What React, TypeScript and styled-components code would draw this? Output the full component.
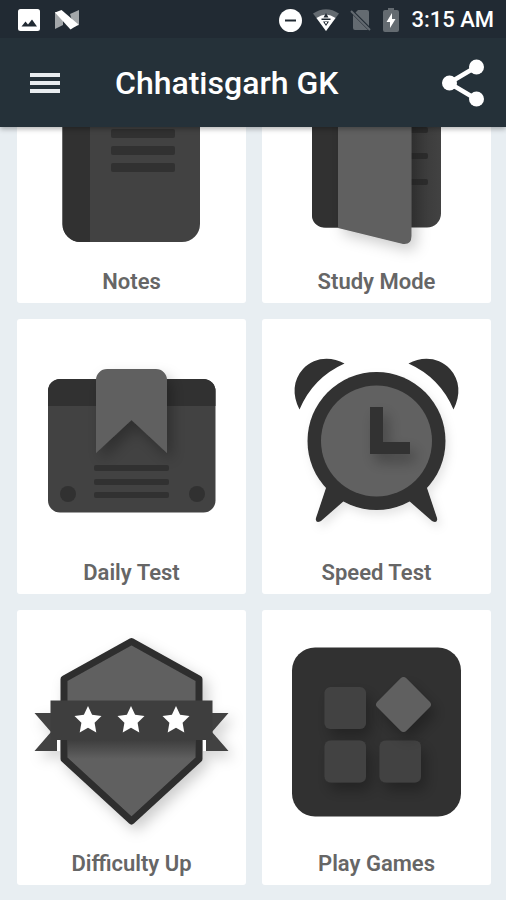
import React from "react";
import styled, { createGlobalStyle } from "styled-components";

const GlobalStyle = createGlobalStyle`
  * { box-sizing: border-box; }
  body { margin: 0; background: #e8eef2; }
  button { font: inherit; border: 0; padding: 0; background: none; cursor: pointer; }
`;

const dark = "#313131";
const mid = "#424242";
const light = "#616161";

const Screen = styled.div`
  height: 100vh;
  display: flex;
  flex-direction: column;
  font-family: Roboto, "Liberation Sans", sans-serif;
`;

const StatusBar = styled.div`
  flex: none;
  height: 38px;
  display: flex;
  align-items: center;
  justify-content: space-between;
  padding: 2px 12px 0 18px;
  background: #212a33;
  color: #fff;
  z-index: 2;
`;

const StatusGroup = styled.div<{ $gap: number }>`
  display: flex;
  align-items: center;
  gap: ${(p) => p.$gap}px;
`;

const Clock = styled.time`
  font-size: 22px;
  line-height: 28px;
  font-weight: 500;
`;

const AppBar = styled.header`
  flex: none;
  height: 89px;
  display: flex;
  align-items: center;
  padding: 0 20px 0 28px;
  background: #253139;
  color: #fff;
  box-shadow: 0 2px 5px rgba(0, 0, 0, 0.3);
  z-index: 1;
`;

const IconButton = styled.button`
  flex: none;
  display: flex;
  color: inherit;
`;

const Title = styled.h1`
  flex: 1;
  margin: 0 0 0 53px;
  font-size: 32px;
  line-height: 40px;
  font-weight: 500;
  white-space: nowrap;
`;

/* Reversed column: the list opens at its last row and scrolls up from there. */
const Scroller = styled.main`
  flex: 1;
  min-height: 0;
  display: flex;
  flex-direction: column-reverse;
  overflow-y: auto;
  scrollbar-width: none;
`;

const Grid = styled.div`
  display: grid;
  grid-template-columns: 1fr 1fr;
  gap: 16px;
  padding: 16px 15px 15px 17px;
`;

const Card = styled.button`
  display: flex;
  flex-direction: column;
  padding: 0 0 9px;
  border-radius: 3px;
  background: #fff;
`;

const Art = styled.svg`
  display: block;
  width: 100%;
`;

const Label = styled.span`
  align-self: center;
  color: #666;
  font-size: 22px;
  line-height: 24px;
  font-weight: 600;
`;

const Notes = () => (
  <>
    <rect x="45.5" y="30" width="137.5" height="184" rx="18" fill={mid} />
    <path d="M63.5 30H73V214H63.5A18 18 0 0 1 45.5 196V48A18 18 0 0 1 63.5 30Z" fill={dark} />
    {[101, 118, 135].map((y) => (
      <rect key={y} x="94" y={y} width="64" height="9" rx="2" fill={dark} />
    ))}
  </>
);

const Study = () => (
  <>
    <defs>
      <linearGradient id="page" x1="0" x2="1">
        <stop offset="0.75" stopColor="#363636" />
        <stop offset="1" stopColor={mid} />
      </linearGradient>
    </defs>
    <rect x="50" y="44" width="129" height="155.5" rx="14" fill="url(#page)" />
    <path d="M64 44H76V199.5H62A12 12 0 0 1 50 187V56A12 12 0 0 1 64 44Z" fill={dark} />
    {[99, 125, 151].map((y) => (
      <rect key={y} x="140" y={y} width="26" height="6" rx="2" fill="#2c2c2c" />
    ))}
    <path d="M76 50L142 34Q149.5 33 149.5 41V208Q149.5 217 141 216L76 200Z" fill={light} filter="url(#lift)" />
  </>
);

const Daily = () => (
  <>
    <rect x="31" y="60" width="167.5" height="133.5" rx="12" fill={mid} />
    <path d="M31 87V72A12 12 0 0 1 43 60H186.5A12 12 0 0 1 198.5 72V87Z" fill={dark} />
    <path d="M90 50H139A11 11 0 0 1 150 61V134L114.5 101L79 134V61A11 11 0 0 1 90 50Z" fill={light} filter="url(#soft)" />
    {[146, 160, 173].map((y) => (
      <rect key={y} x="77" y={y} width="75" height="6" rx="2" fill={dark} />
    ))}
    <circle cx="51" cy="175" r="8" fill={dark} />
    <circle cx="180" cy="175" r="8" fill={dark} />
  </>
);

const bell = "M37.5 90.5C30 76 31 61 41 50C52 38 69 37 82.5 44.5A88 88 0 0 0 37.5 90.5Z";
const leg = "M65 166L54 199Q53 205 59 202L83 181Z";

const Speed = () => (
  <>
    <path d={bell} fill={dark} />
    <path d={bell} fill={dark} transform="matrix(-1 0 0 1 229 0)" />
    <g fill={dark} filter="url(#faint)">
      <path d={leg} />
      <path d={leg} transform="matrix(-1 0 0 1 229 0)" />
      <circle cx="114.5" cy="122" r="69" />
    </g>
    <circle cx="114.5" cy="122" r="55.5" fill={light} />
    <path d="M108 88H121V123H148V135H108Z" fill={dark} filter="url(#soft)" />
  </>
);

const star = "M0-14L4.1-5.2L13.5-4L6.6 2.7L8.3 12.5L0 7.8L-8.3 12.5L-6.6 2.7L-13.5-4L-4.1-5.2Z";

const Difficulty = () => (
  <>
    <defs>
      <linearGradient id="below" x1="0" y1="0" x2="0" y2="1">
        <stop offset="0" stopColor="#222" stopOpacity="0.55" />
        <stop offset="1" stopColor="#222" stopOpacity="0" />
      </linearGradient>
    </defs>
    <g filter="url(#lift)">
      <path d="M114.5 31.5L182 69V149L114.5 211L47 149V69Z" fill={light} stroke="#2e2e2e" strokeWidth="7" strokeLinejoin="round" />
      <path d="M17.5 103H40V141H17.5L34 122ZM211.5 103H189V141H211.5L195 122Z" fill={mid} />
    </g>
    <path d="M50.5 130H178.5V149H50.5Z" fill="url(#below)" />
    <path d="M40 130H43V141H40ZM186 130H189V141H186Z" fill="#fff" />
    <rect x="33.5" y="90.5" width="162" height="39.5" fill="#3e3e3e" />
    {[71, 114, 159].map((x) => (
      <path key={x} d={star} fill="#fff" transform={`translate(${x} 110)`} />
    ))}
  </>
);

const Games = () => (
  <>
    <rect x="30" y="37.5" width="169" height="169" rx="23" fill={dark} />
    <g fill={mid} filter="url(#soft)">
      <rect x="62.5" y="77" width="41.5" height="42" rx="6" />
      <rect x="62.5" y="130.5" width="41.5" height="42" rx="6" />
      <rect x="117.5" y="130.5" width="41.5" height="42" rx="6" />
    </g>
    <g filter="url(#soft)">
      <rect x="121" y="74" width="41" height="41" rx="4" fill={light} transform="rotate(45 141.5 94.5)" />
    </g>
  </>
);

const items = [
  { label: "Notes", Drawing: Notes },
  { label: "Study Mode", Drawing: Study },
  { label: "Daily Test", Drawing: Daily },
  { label: "Speed Test", Drawing: Speed },
  { label: "Difficulty Up", Drawing: Difficulty },
  { label: "Play Games", Drawing: Games },
];

const ShadowFilters = () => (
  <svg width="0" height="0" aria-hidden="true" display="block">
    <defs>
      <filter id="lift" x="-20%" y="-20%" width="150%" height="150%">
        <feDropShadow dx="5" dy="6" stdDeviation="7" floodColor="#000" floodOpacity="0.2" />
      </filter>
      <filter id="faint" x="-20%" y="-20%" width="150%" height="150%">
        <feDropShadow dx="3" dy="5" stdDeviation="5" floodColor="#000" floodOpacity="0.1" />
      </filter>
      <filter id="soft" x="-30%" y="-30%" width="180%" height="180%">
        <feDropShadow dx="5" dy="8" stdDeviation="7" floodColor="#000" floodOpacity="0.28" />
      </filter>
    </defs>
  </svg>
);

export default function App() {
  return (
    <Screen>
      <GlobalStyle />
      <ShadowFilters />
      <StatusBar>
        <StatusGroup $gap={14}>
          <svg width="22" height="22" viewBox="0 0 22 22">
            <rect width="22" height="22" rx="2.5" fill="#fff" />
            <path d="M3.5 17.5L7.5 12.5L10 15.5L14 10.5L19 17.5Z" fill="#212a33" />
          </svg>
          <svg width="26" height="22" viewBox="0 0 26 22">
            <path d="M1 3H9V16L1 20ZM16 5L25 1V16L20 18Z" fill="#a3a7aa" />
            <path d="M1 3.5L7.5 1L24.5 15.5L16.5 20.5Z" fill="#fff" />
          </svg>
        </StatusGroup>
        <StatusGroup $gap={11}>
          <svg width="23" height="23" viewBox="0 0 23 23">
            <circle cx="11.5" cy="11.5" r="11.5" fill="#fff" />
            <path d="M6 10.5H17V12.5H6Z" fill="#212a33" />
          </svg>
          <svg width="26" height="22" viewBox="0 0 26 22">
            <path d="M0 4.5Q13-4 26 4.5L13 22Z" fill="#646b71" />
            <path d="M3.500 9Q13 2 22.500 9L13 22Z" fill="#fff" />
            <path d="M13 4L15.500 8.500H10.500ZM8.500 9.500H17.500V11H8.500ZM10 12.500H16L13 17Z" fill="#212a33" />
            <path d="M12 13H14V14.5H12Z" fill="#fff" />
          </svg>
          <svg width="21" height="22" viewBox="0 0 21 22">
            <path d="M8 1H17Q19 1 19 3V17L5.5 3.5ZM3 6L18 21H5Q3 21 3 19Z" fill="#646b71" />
            <path d="M1 2L20 21" stroke="#646b71" strokeWidth="2" />
          </svg>
          <svg width="18" height="24" viewBox="0 0 18 24">
            <path d="M6 0H12V2H15Q17 2 17 4V22Q17 24 15 24H3Q1 24 1 22V4Q1 2 3 2H6Z" fill="#646b71" />
            <path d="M10 5L4.5 14H8V20L13.5 11H10Z" fill="#fff" />
          </svg>
          <Clock>3:15 AM</Clock>
        </StatusGroup>
      </StatusBar>
      <AppBar>
        <IconButton aria-label="Menu">
          <svg width="34" height="22" viewBox="0 0 34 22">
            <path d="M2 1H32V5H2ZM2 9H32V13H2ZM2 17H32V21H2Z" fill="#e9ecef" />
          </svg>
        </IconButton>
        <Title>Chhatisgarh GK</Title>
        <IconButton aria-label="Share">
          <svg width="44" height="48" viewBox="0 0 44 48">
            <path d="M34 8L7 24L34 40" fill="none" stroke="#fff" strokeWidth="4.5" />
            <g fill="#fff">
              <circle cx="34.5" cy="8" r="7.5" />
              <circle cx="7.5" cy="24" r="7.5" />
              <circle cx="34.5" cy="40" r="7.5" />
            </g>
          </svg>
        </IconButton>
      </AppBar>
      <Scroller>
        <Grid>
          {items.map(({ label, Drawing }) => (
            <Card key={label}>
              <Art viewBox="0 0 229 242" aria-hidden="true">
                <Drawing />
              </Art>
              <Label>{label}</Label>
            </Card>
          ))}
        </Grid>
      </Scroller>
    </Screen>
  );
}
